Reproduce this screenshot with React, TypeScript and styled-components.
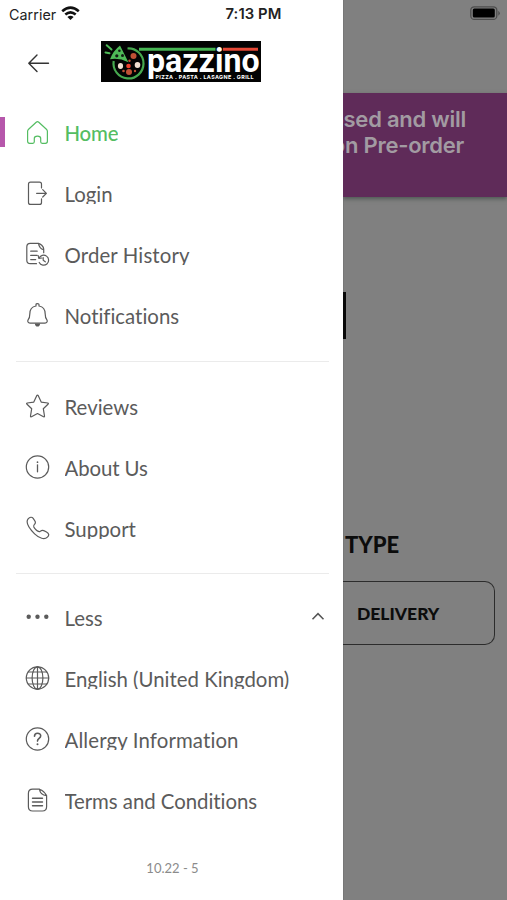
import React from "react";
import styled, { createGlobalStyle } from "styled-components";

const GlobalStyle = createGlobalStyle`
  * { box-sizing: border-box; }
  body { margin: 0; background: #808080; font-family: Lato, "Liberation Sans", sans-serif; }
`;

const Screen = styled.main`
  display: grid;
  grid-template-columns: 343px 164px;
  width: 507px;
  height: 900px;
  overflow: hidden;
`;

const Drawer = styled.aside`
  background: #fff;
  display: flex;
  flex-direction: column;
  min-width: 0;
`;

const StatusBar = styled.header`
  display: flex;
  height: 28px;
  align-items: center;
  font: 400 14.3px Inter, sans-serif;
  color: #222;
  padding-left: 9px;
  letter-spacing: 0.05px;
  svg { margin-left: 5px; margin-top: -2px; }
`;

const Clock = styled.time`
  margin-left: auto;
  margin-right: 61.5px;
  font-weight: 600;
  letter-spacing: 0.1px;
  font-size: 14.8px;
`;

const DrawerHeader = styled.div`
  display: flex;
  height: 74px;
  padding: 13px 0 0 27px;
`;

const BackButton = styled.button`
  border: 0;
  padding: 0;
  background: none;
  width: 74px;
  height: 44px;
  text-align: left;
  svg { display: block; }
`;

const MenuGroup = styled.nav<{ $gap?: number }>`
  display: flex;
  flex-direction: column;
  margin: 0 14px ${(p) => (p.$gap ? p.$gap - 1 : 0)}px 16px;
  padding-bottom: ${(p) => p.$gap ?? 0}px;
  border-bottom: ${(p) => (p.$gap ? 1 : 0)}px solid #ebebeb;
`;

const MenuItem = styled.a<{ $active?: boolean }>`
  display: flex;
  align-items: center;
  height: 61px;
  margin-left: -16px;
  padding-left: ${(p) => (p.$active ? 19 : 24)}px;
  color: ${(p) => (p.$active ? "#54bd62" : "#5b5b5b")};
  font-weight: ${(p) => (p.$active ? 500 : 400)};
  &::before {
    content: "";
    display: ${(p) => (p.$active ? "block" : "none")};
    width: 5px;
    height: 30px;
    margin: 0 19px 2px -19px;
    background: #b657ab;
  }
`;

const IconSlot = styled.span`
  display: flex;
  width: 40.5px;
  padding-bottom: 2px;
  svg { display: block; }
`;

const Label = styled.span<{ $tracking?: number }>`
  display: block;
  height: 20px;
  line-height: 20px;
  font-size: 20.4px;
  letter-spacing: ${(p) => p.$tracking ?? 0}px;
  font-variant-ligatures: none;
  white-space: nowrap;
  overflow: hidden;
`;

const Chevron = styled.svg`
  margin-left: auto;
  margin-right: 4px;
  margin-bottom: 1px;
`;

const Version = styled.footer`
  margin-top: 27px;
  padding-left: 2px;
  text-align: center;
  font-size: 13px;
  line-height: 20px;
  color: #8b8b8b;
`;

const Backdrop = styled.section`
  display: flex;
  flex-direction: column;
  min-width: 0;
  background: #808080;
  overflow: hidden;
  box-shadow: inset 1px 0 #777;
`;

const BatteryBar = styled.div`
  display: flex;
  justify-content: flex-end;
  height: 93px;
  padding: 6px 6px 0 0;
`;

const Notice = styled.div`
  display: flex;
  flex-direction: column;
  align-items: flex-end;
  height: 104px;
  padding: 13px 41px 0 0;
  background: #5f2b59;
  color: #a29ba2;
  box-shadow: 0 2px 4px #4f5954;
  font: 600 22px/26px Inter, sans-serif;
  letter-spacing: -0.25px;
  white-space: nowrap;
  & span:last-child { margin-right: 2px; }
`;

const LogoEdge = styled.div`
  width: 3px;
  height: 47px;
  margin-top: 95px;
  background: #080808;
`;

const OrderTitle = styled.h2`
  margin: 191px 0 0 2px;
  font: 900 22px/30px Lato, sans-serif;
  color: #0c0c0c;
`;

const DeliveryButton = styled.button`
  width: 152px;
  height: 64px;
  margin-top: 21px;
  padding: 1px 0 0 14px;
  text-align: left;
  border: 1.5px solid #2c2c2c;
  border-left: 0;
  border-radius: 0 10px 10px 0;
  background: transparent;
  color: #0c0c0c;
  font: 900 17.5px/24px Lato, sans-serif;
`;

type IconName = "home" | "login" | "history" | "bell" | "star" | "info" | "phone" | "dots" | "globe" | "help" | "terms";

const drawings: Record<IconName, React.ReactNode> = {
  home: <path d="m4.6 10.2 7.6-7q1.3-1 2.6 0l7.6 7q1 .9 1 2.1v10q0 2-2 2h-3.2q-1.5 0-1.5-1.5v-3.4q0-2.2-3.2-2.2t-3.2 2.2v3.4q0 1.5-1.5 1.5H5.6q-2 0-2-2v-10q0-1.2 1-2.1Z" />,
  login: <><path d="M17.5 8V4.2q0-2-2-2h-9q-2 0-2 2v18.2q0 2 2 2h9q2 0 2-2v-3.6" /><path d="M12.6 13.3h9.7m-3.6-3.7 3.7 3.7-3.7 3.7" /></>,
  history: <><path d="M12.5 22.7H6.2q-3.4 0-3.4-3.4V6q0-3.7 3.4-3.7h7.6c2.7 0 5.9 3.3 5.9 5.8v3.6M14.4 2.4q1 5.4 5.2 6.3" /><path d="M6.7 10.2h6.5M6.7 14.4h6.5M6.7 18.6h5" /><path d="m14.2 14.5.6 3 3-.5m-2.8.3a5 5 0 1 1 .2 4.2m4-5v2.8l2.1 1.5" /></>,
  bell: <><path d="M12 4V2.6q0-1 1.5-1t1.5 1V4c4.2.8 6.2 3.8 6.2 7.9 0 3.8.7 4.8 1.7 6 .9 1.4 0 3.3-1.9 3.3H6c-1.9 0-2.8-1.9-1.9-3.3 1-1.2 1.7-2.2 1.7-6C5.8 7.8 7.8 4.8 12 4Z" /><path d="M10.8 21.4q.3 3.1 2.7 3.1t2.7-3.1Z" fill="currentColor" stroke="none" /></>,
  star: <path d="m12.6 2.9-2.8 6.2-6.6.9q-1 .2-.4 1l4.9 4.7-1.2 7.3q-.1 1.1 1 .7l6-3.2 6 3.2q1.1.4 1-.7l-1.2-7.3 4.9-4.7q.6-.8-.4-1l-6.6-.9-2.8-6.2q-.9-1.4-1.8 0Z" />,
  info: <><circle cx="13.5" cy="13" r="11.2" /><path d="M13.5 10.8v7" strokeWidth="1.3" /><circle cx="13.5" cy="8.2" r=".85" fill="currentColor" stroke="none" /></>,
  phone: <path d="M4.1 3.9c1.7-2 3.9-2.2 5.1-.5 2.2 3.2 2.9 4 1.3 6-1.4 1.6-1.2 2.3.4 4.2 2.1 2.4 3.8 3.8 5.2 2.8 2-1.6 3.1-1.5 6.4.5 2.4 1.4 3.1 3.2.9 5.2-2.8 2.8-8.1 1.4-12.8-3.2C5.3 13.6 1.2 7.7 4.1 3.9Z" />,
  dots: <g fill="currentColor" stroke="none"><circle cx="4.7" cy="12.7" r="2.2" /><circle cx="13.5" cy="12.7" r="2.2" /><circle cx="22.3" cy="12.7" r="2.2" /></g>,
  globe: <><circle cx="13.5" cy="13" r="11.2" /><ellipse cx="13.5" cy="13" rx="5.4" ry="11.2" /><path d="M13.5 1.8v22.4M2.3 13h22.4M4.4 7h18.2M4.4 19h18.2" /></>,
  help: <><circle cx="13.5" cy="13" r="11.2" /><path d="M10.5 10.2c0-4 6.2-3.8 6.2-.4 0 2.6-3.2 2.6-3.2 5.3" strokeWidth="1.6" /><circle cx="13.5" cy="18.2" r="1" fill="currentColor" stroke="none" /></>,
  terms: <><path d="M15.5 2.2H8.6Q4.4 2.2 4.4 6.4v13.4q0 4.2 4.2 4.2h9.8q4.2 0 4.2-4.2V8.6Q20.2 4 15.5 2.2M15.5 2.3q.8 5.6 7 6.3" /><path d="M8.5 11.2h10M8.5 15h10M8.5 18.8h10" strokeWidth="1.4" /></>,
};

function Icon({ name }: { name: IconName }) {
  return <svg width="27" height="26" viewBox="0 0 27 26" fill="none" stroke="currentColor" strokeWidth="1.2" strokeLinecap="round" strokeLinejoin="round">{drawings[name]}</svg>;
}

function Brand() {
  return (
    <svg width="160" height="41" viewBox="0 0 160 41" aria-label="Pazzino">
      <path fill="#030303" d="M0 0h160v41H0z" />
      <path d="M38 8.2h76.5" stroke="#47b654" strokeWidth="3" />
      <path d="M122 8.2h35" stroke="#e64735" strokeWidth="3" />
      <path d="M26.5 7.5A15 15 0 1 1 12.7 20" fill="none" stroke="#47a94f" strokeWidth="2.2" />
      <path d="m19 4.5 8.4 16.7Q18 16.5 9 18.2 12 10 19 4.5Z" fill="#4eba57" />
      <path d="m10.5 8.5-4.8-4.3m2.8 8-4-.8" stroke="#4eba57" strokeWidth="2" strokeLinecap="round" />
      <g fill="#121b12"><circle cx="18.4" cy="9.8" r="1.3" /><circle cx="15.8" cy="14.8" r="1.6" /><circle cx="21.5" cy="14.5" r="1.5" /></g>
      <g fill="#bf5034"><circle cx="32.5" cy="15" r="3" /><circle cx="28" cy="31" r="3" /><circle cx="22.5" cy="30" r="1.3" /><circle cx="34" cy="30" r="1.2" /><circle cx="28.5" cy="19.7" r="1.2" /></g>
      <circle cx="27.5" cy="25" r="2.3" fill="#ef3d2c" />
      <g fill="#f1ded0"><ellipse cx="19.5" cy="25" rx="2.6" ry="3" /><ellipse cx="36.5" cy="24" rx="2.8" ry="3" /></g>
      <text x="46" y="31.2" fill="#fff" fontFamily="Roboto" fontSize="33.5" fontWeight="700" textLength="112.5" lengthAdjust="spacingAndGlyphs">pazzino</text>
      <text x="54.5" y="38.2" fill="#fff" fontFamily="Inter" fontSize="5.4" fontWeight="700" textLength="98">PIZZA . PASTA . LASAGNE . GRILL</text>
    </svg>
  );
}

function Item({ icon, children, active, tracking }: { icon: IconName; children: React.ReactNode; active?: boolean; tracking?: number }) {
  return <MenuItem $active={active}><IconSlot><Icon name={icon} /></IconSlot><Label $tracking={tracking}>{children}</Label></MenuItem>;
}

export default function App() {
  return (
    <>
      <GlobalStyle />
      <Screen>
        <Drawer>
          <StatusBar>
            Carrier
            <svg width="19" height="15" viewBox="0 0 19 15" fill="none" stroke="#111" strokeWidth="2.6"><path d="M1.2 5.2q8.3-7.2 16.6 0M4.3 8.6q5.2-4.4 10.4 0" /><path d="m6.4 11.1q3.1-2.5 6.2 0L9.5 14Z" fill="#111" stroke="none" /></svg>
            <Clock>7:13 PM</Clock>
          </StatusBar>
          <DrawerHeader>
            <BackButton aria-label="Close menu">
              <svg width="24" height="44" viewBox="0 0 24 44" fill="none" stroke="#333" strokeWidth="1.4" strokeLinecap="round" strokeLinejoin="round"><path d="M2 22.3h19.5M10 14l-8.2 8.3 8.2 8.2" /></svg>
            </BackButton>
            <Brand />
          </DrawerHeader>
          <MenuGroup $gap={15}>
            <Item icon="home" active tracking={-0.2}>Home</Item>
            <Item icon="login">Login</Item>
            <Item icon="history" tracking={0.13}>Order History</Item>
            <Item icon="bell">Notifications</Item>
          </MenuGroup>
          <MenuGroup $gap={14}>
            <Item icon="star">Reviews</Item>
            <Item icon="info" tracking={-0.1}>About Us</Item>
            <Item icon="phone">Support</Item>
          </MenuGroup>
          <MenuGroup>
            <MenuItem><IconSlot><Icon name="dots" /></IconSlot><Label>Less</Label><Chevron width="14" height="12" viewBox="0 0 14 12" fill="none" stroke="#555" strokeWidth="1.5"><path d="m1.5 8.2 5.5-5.6 5.5 5.6" /></Chevron></MenuItem>
            <Item icon="globe">English (United Kingdom)</Item>
            <Item icon="help" tracking={0.13}>Allergy Information</Item>
            <Item icon="terms" tracking={-0.04}>Terms and Conditions</Item>
          </MenuGroup>
          <Version>10.22 - 5</Version>
        </Drawer>
        <Backdrop>
          <BatteryBar><svg width="31" height="15" viewBox="0 0 31 15"><rect x=".8" y=".8" width="26" height="12.6" rx="3.5" fill="none" stroke="#4d4d4d" strokeWidth="1.3" /><rect x="2.8" y="2.6" width="22" height="9" rx="1.5" /><path d="M28.3 4.7q3 2.5 0 5Z" fill="#4d4d4d" /></svg></BatteryBar>
          <Notice><span>closed and will</span><span>open on Pre-order</span></Notice>
          <LogoEdge />
          <OrderTitle>TYPE</OrderTitle>
          <DeliveryButton>DELIVERY</DeliveryButton>
        </Backdrop>
      </Screen>
    </>
  );
}
